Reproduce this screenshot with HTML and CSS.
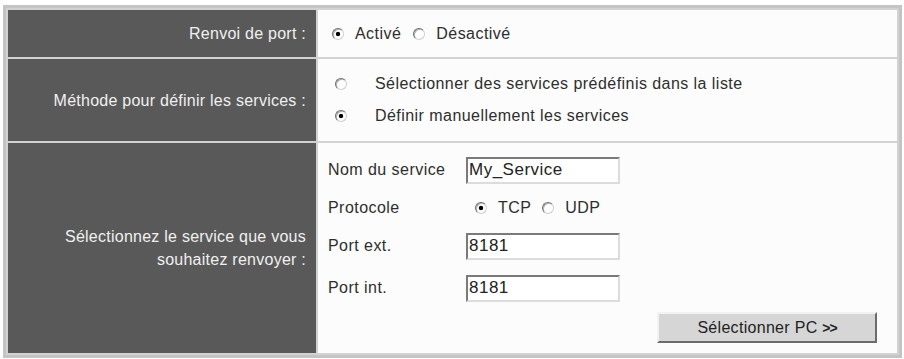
FILE: index.html
```html
<!DOCTYPE html>
<html lang="fr">
<head>
    <meta charset="UTF-8">
    <title>Renvoi de port</title>
    <link rel="stylesheet" href="styles.css">
</head>
<body>
<table class="settings">
    <!-- Port forwarding on/off -->
    <tr class="row-forward">
        <td class="label">Renvoi de port :</td>
        <td class="value">
            <div class="choices">
                <label class="choice"><input type="radio" name="forward" checked>Activé</label>
                <label class="choice"><input type="radio" name="forward">Désactivé</label>
            </div>
        </td>
    </tr>

    <!-- How services are defined -->
    <tr class="row-method">
        <td class="label">Méthode pour définir les services :</td>
        <td class="value">
            <div class="method-list">
                <label class="method"><input type="radio" name="method">Sélectionner des services prédéfinis dans la liste</label>
                <label class="method"><input type="radio" name="method" checked>Définir manuellement les services</label>
            </div>
        </td>
    </tr>

    <!-- Manual service -->
    <tr class="row-service">
        <td class="label">Sélectionnez le service que vous<br>souhaitez renvoyer :</td>
        <td class="value">
            <div class="service-form">
                <span class="field-name">Nom du service</span>
                <div><input type="text" class="field" value="My_Service"></div>

                <span class="field-name">Protocole</span>
                <div class="choices protocol">
                    <label class="choice"><input type="radio" name="proto" checked>TCP</label>
                    <label class="choice"><input type="radio" name="proto">UDP</label>
                </div>

                <span class="field-name">Port ext.</span>
                <div><input type="text" class="field" value="8181"></div>

                <span class="field-name">Port int.</span>
                <div><input type="text" class="field" value="8181"></div>

                <button type="button" class="select-pc">Sélectionner PC <b>&gt;&gt;</b></button>
            </div>
        </td>
    </tr>
</table>
</body>
</html>
```

FILE: styles.css
```css
body {
    margin: 0;
    padding: 5px 0 0 3px;
    background-color: #fff;
    font-family: "Liberation Sans", Arial, sans-serif;
    font-size: 16px;
}

.settings {
    width: 899px;
    border: 3px solid #c4c4c4;
    border-spacing: 2px;
    background-color: #d2d2d2;
}

.settings td {
    box-sizing: border-box;
    padding: 0;
}

.settings .label {
    width: 308px;
    padding-right: 10px;
    background-color: #595959;
    color: #f0f0f0;
    text-align: right;
    vertical-align: middle;
    line-height: 23px;
    letter-spacing: 0.25px;
}

.settings .value {
    background-color: #fcfcfc;
    color: #2e2e2e;
    padding-left: 14px;
    letter-spacing: 0.45px;
}

.row-forward td {
    height: 47px;
}
.row-method td {
    height: 82px;
}

/* radios */
input[type="radio"] {
    appearance: none;
    -webkit-appearance: none;
    width: 12px;
    height: 12px;
    margin: 0;
    border-radius: 50%;
    border: 1px solid;
    border-color: #6e6e6e #cfcfcf #cfcfcf #6e6e6e;
    background-color: #fff;
    box-shadow: inset 1px 1px 0 #b4b4b4;
    flex-shrink: 0;
}
input[type="radio"]:checked {
    background: radial-gradient(circle, #000 0, #000 1.8px, #fff 2.6px);
}

.choices {
    display: flex;
    align-items: center;
    gap: 12px;
}
.choice {
    display: inline-flex;
    align-items: center;
    gap: 11px;
}

.method-list {
    padding-left: 3px;
}
.method {
    display: flex;
    align-items: center;
    gap: 28px;
    height: 32px;
}

/* manual service form */
.row-service .value {
    vertical-align: top;
    padding: 8px 20px 10px 10px;
}
.service-form {
    display: grid;
    grid-template-columns: 138px 1fr;
    grid-template-rows: 38px 37px 40px 44px auto;
    align-items: center;
}
.protocol {
    padding-left: 9px;
    gap: 11px;
}
.field {
    box-sizing: border-box;
    width: 154px;
    height: 27px;
    margin: 0;
    padding: 0 1px;
    border: 2px solid;
    border-color: #7a7a7a #dcdcdc #dcdcdc #7a7a7a;
    background-color: #fff;
    font-family: inherit;
    font-size: 17px;
    letter-spacing: 0.5px;
    color: #222;
}

.select-pc {
    grid-column: 1 / -1;
    justify-self: end;
    width: 220px;
    height: 31px;
    margin-top: 2px;
    border: 2px solid;
    border-color: #f2f2f2 #6c6c6c #6c6c6c #f2f2f2;
    background-color: #d6d6d6;
    font-family: inherit;
    font-size: 16px;
    letter-spacing: 0.3px;
    color: #222;
}
.select-pc b {
    font-size: 14px;
    letter-spacing: -1px;
}
```
